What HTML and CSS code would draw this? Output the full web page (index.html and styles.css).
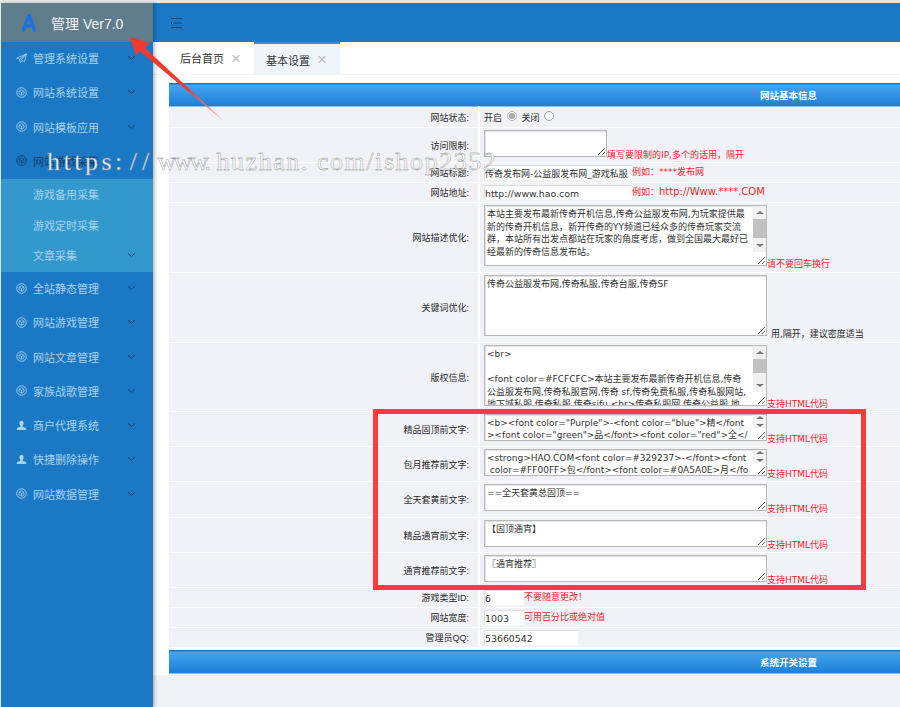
FILE: index.html
```html
<!DOCTYPE html>
<html lang="zh-CN">
<head>
    <meta charset="UTF-8">
    <title>管理 Ver7.0</title>
    <link rel="stylesheet" href="styles.css">
</head>
<body>
    <svg class="icon-defs" width="0" height="0">
        <symbol id="i-cube" viewBox="0 0 12 12">
            <circle cx="6" cy="6" r="5.2" fill="none" stroke="currentColor"/>
            <path d="M6 3 8.700 4.500v3L6 9 3.300 7.500v-3zM3.300 4.500 6 6l2.700-1.500M6 6v3" fill="none" stroke="currentColor" stroke-width=".8"/>
        </symbol>
        <symbol id="i-plane" viewBox="0 0 12 12">
            <path d="M11.400 1 .8 5.600l3 1.300.9 3.600 1.900-2.300 2.600 1.300zM3.800 6.900 11.400 1 5 8" fill="none" stroke="currentColor" stroke-width=".9"/>
        </symbol>
        <symbol id="i-user" viewBox="0 0 12 12">
            <path d="M6 .8c1.500 0 2.300 1.100 2.300 2.700S7.500 6 7.200 6.500v.8c1.500.6 4 1 4 2.700v1H.8v-1c0-1.700 2.500-2.100 4-2.700v-.8C4.500 6 3.700 5.100 3.700 3.500S4.500.8 6 .8z" fill="currentColor"/>
        </symbol>
        <symbol id="i-down" viewBox="0 0 10 6">
            <path d="M1 1l4 3.500L9 1" fill="none" stroke="currentColor"/>
        </symbol>
    </svg>

    <aside class="sidebar">
        <div class="logo">
            <svg class="logo-mark" viewBox="0 0 16 18" width="16" height="18">
                <path d="M8 .5 2 17.500M8 .5l6 17M4 12h8" fill="none" stroke="#1d6fe0" stroke-width="3"/>
            </svg>
            <span>管理 Ver7.0</span>
        </div>
        <nav>
            <a class="nav-item"><svg class="nav-icon"><use href="#i-plane"/></svg>管理系统设置<svg class="nav-arrow"><use href="#i-down"/></svg></a>
            <a class="nav-item"><svg class="nav-icon"><use href="#i-cube"/></svg>网站系统设置<svg class="nav-arrow"><use href="#i-down"/></svg></a>
            <a class="nav-item"><svg class="nav-icon"><use href="#i-cube"/></svg>网站模板应用<svg class="nav-arrow"><use href="#i-down"/></svg></a>
            <a class="nav-item nav-active"><svg class="nav-icon"><use href="#i-cube"/></svg>网站游戏采集</a>
            <div class="sub-nav">
                <a class="sub-item">游戏备用采集</a>
                <a class="sub-item">游戏定时采集</a>
                <a class="sub-item">文章采集<svg class="nav-arrow"><use href="#i-down"/></svg></a>
            </div>
            <a class="nav-item"><svg class="nav-icon"><use href="#i-cube"/></svg>全站静态管理<svg class="nav-arrow"><use href="#i-down"/></svg></a>
            <a class="nav-item"><svg class="nav-icon"><use href="#i-cube"/></svg>网站游戏管理<svg class="nav-arrow"><use href="#i-down"/></svg></a>
            <a class="nav-item"><svg class="nav-icon"><use href="#i-cube"/></svg>网站文章管理<svg class="nav-arrow"><use href="#i-down"/></svg></a>
            <a class="nav-item"><svg class="nav-icon"><use href="#i-cube"/></svg>家族战歌管理<svg class="nav-arrow"><use href="#i-down"/></svg></a>
            <a class="nav-item"><svg class="nav-icon"><use href="#i-user"/></svg>商户代理系统<svg class="nav-arrow"><use href="#i-down"/></svg></a>
            <a class="nav-item"><svg class="nav-icon"><use href="#i-user"/></svg>快捷删除操作<svg class="nav-arrow"><use href="#i-down"/></svg></a>
            <a class="nav-item"><svg class="nav-icon"><use href="#i-cube"/></svg>网站数据管理<svg class="nav-arrow"><use href="#i-down"/></svg></a>
        </nav>
    </aside>

    <div class="main">
        <header class="topbar">
            <svg class="menu-icon" viewBox="0 0 12 10" width="12" height="10">
                <path d="M1 .5h11M3.500 5H12M1 9.500h11M2.500 3.500 1 5l1.500 1.500" fill="none" stroke="#17456e"/>
            </svg>
        </header>
        <div class="tabs">
            <div class="tab">后台首页<span class="tab-close">×</span></div>
            <div class="tab tab-active">基本设置<span class="tab-close">×</span></div>
        </div>
        <div class="content">
            <table class="form-table">
                <colgroup><col class="col-label"><col></colgroup>
                <tr class="section-head"><th colspan="2">网站基本信息</th></tr>
                <tr class="h21">
                    <td class="label">网站状态:</td>
                    <td class="field">开启 <input type="radio" name="state" checked> &nbsp;关闭 <input type="radio" name="state"></td>
                </tr>
                <tr class="h35">
                    <td class="label">访问限制:</td>
                    <td class="field"><span class="ta-wrap"><textarea class="ta-small"></textarea></span><span class="hint">填写要限制的IP,多个的话用，隔开</span></td>
                </tr>
                <tr class="h20">
                    <td class="label">网站标题:</td>
                    <td class="field"><input class="inp-wide cjk" type="text" value="传奇发布网-公益服发布网_游戏私服"><span class="hint">例如：****发布网</span></td>
                </tr>
                <tr class="h20">
                    <td class="label">网站地址:</td>
                    <td class="field"><input class="inp-wide" type="text" value="http://www.hao.com"><span class="hint">例如：<span class="hint-url">http://Www.****.COM</span></span></td>
                </tr>
                <tr class="h70">
                    <td class="label">网站描述优化:</td>
                    <td class="field"><span class="ta-wrap"><textarea class="ta-large" wrap="off">本站主要发布最新传奇开机信息,传奇公益服发布网,为玩家提供最
新的传奇开机信息，新开传奇的YY频道已经众多的传奇玩家交流
群，本站所有出发点都站在玩家的角度考虑，做到全国最大最好已
经最新的传奇信息发布站。</textarea><span class="fake-scroll"><span class="sb-thumb"></span></span></span><span class="hint">请不要回车换行</span></td>
                </tr>
                <tr class="h70">
                    <td class="label">关键词优化:</td>
                    <td class="field"><span class="ta-wrap"><textarea class="ta-large">传奇公益服发布网,传奇私服,传奇台服,传奇SF</textarea></span><span class="hint hint-dark">用,隔开，建议密度适当</span></td>
                </tr>
                <tr class="h69">
                    <td class="label">版权信息:</td>
                    <td class="field"><span class="ta-wrap"><textarea class="ta-large" wrap="off">&lt;br&gt;

&lt;font color=#FCFCFC&gt;本站主要发布最新传奇开机信息,传奇
公益服发布网,传奇私服官网,传奇 sf,传奇免费私服,传奇私服网站,
地下城私服,传奇私服,传奇sifu,&lt;br&gt;传奇私服网,传奇公益服,地</textarea><span class="fake-scroll"><span class="sb-thumb sb-thumb-small"></span></span></span><span class="hint">支持HTML代码</span></td>
                </tr>
                <tr class="h35">
                    <td class="label">精品固顶前文字:</td>
                    <td class="field"><span class="ta-wrap"><textarea class="ta-line" wrap="off">&lt;b&gt;&lt;font color="Purple"&gt;-&lt;font color="blue"&gt;精&lt;/font
&gt;&lt;font color="green"&gt;品&lt;/font&gt;&lt;font color="red"&gt;全&lt;/</textarea><span class="fake-scroll fake-scroll-short"></span></span><span class="hint">支持HTML代码</span></td>
                </tr>
                <tr class="h35">
                    <td class="label">包月推荐前文字:</td>
                    <td class="field"><span class="ta-wrap"><textarea class="ta-line" wrap="off">&lt;strong&gt;HAO.COM&lt;font color=#329237&gt;-&lt;/font&gt;&lt;font
 color=#FF00FF&gt;包&lt;/font&gt;&lt;font color=#0A5A0E&gt;月&lt;/fo</textarea><span class="fake-scroll fake-scroll-short"></span></span><span class="hint">支持HTML代码</span></td>
                </tr>
                <tr class="h36">
                    <td class="label">全天套黄前文字:</td>
                    <td class="field"><span class="ta-wrap"><textarea class="ta-line">==全天套黄总固顶==</textarea></span><span class="hint">支持HTML代码</span></td>
                </tr>
                <tr class="h35">
                    <td class="label">精品通宵前文字:</td>
                    <td class="field"><span class="ta-wrap"><textarea class="ta-line">【固顶通宵】</textarea></span><span class="hint">支持HTML代码</span></td>
                </tr>
                <tr class="h35">
                    <td class="label">通宵推荐前文字:</td>
                    <td class="field"><span class="ta-wrap"><textarea class="ta-line">〖通宵推荐〗</textarea></span><span class="hint">支持HTML代码</span></td>
                </tr>
                <tr class="h20">
                    <td class="label">游戏类型ID:</td>
                    <td class="field"><input class="inp-small" type="text" value="6"><span class="hint">不要随意更改！</span></td>
                </tr>
                <tr class="h20">
                    <td class="label">网站宽度:</td>
                    <td class="field"><input class="inp-small" type="text" value="1003"><span class="hint">可用百分比或绝对值</span></td>
                </tr>
                <tr class="h20">
                    <td class="label">管理员QQ:</td>
                    <td class="field"><input class="inp-qq" type="text" value="53660542"></td>
                </tr>
                <tr class="spacer"><td colspan="2"></td></tr>
                <tr class="section-head"><th colspan="2">系统开关设置</th></tr>
            </table>
        </div>
        <div class="page-foot"></div>
    </div>

    <!-- annotations drawn over the screenshot -->
    <div class="mark-box"></div>
    <svg class="mark-arrow" viewBox="0 0 100 90" width="100" height="90">
        <defs>
            <linearGradient id="arrow-fade" x1="0" y1="0" x2="1" y2="1">
                <stop offset="0.6" stop-color="#f0392f"/>
                <stop offset="1" stop-color="#f9a3a0"/>
            </linearGradient>
        </defs>
        <path d="M1 0 21 6 15.500 10.500 96 85 10.500 14 7 19z" fill="url(#arrow-fade)"/>
    </svg>
    <div class="watermark"><span class="wm-wide">https:</span><span class="wm-slash">//</span><span class="wm-tight">www.</span> huzhan. com/ishop2352</div>
</body>
</html>
```

FILE: styles.css
```css
* {
    box-sizing: border-box;
}
body {
    margin: 0;
    height: 707px;
    overflow: hidden;
    display: flex;
    padding: 3px 0 0 1px;
    background: #e4e6e8;
    font-family: "Liberation Sans", "Noto Sans CJK SC", sans-serif;
    font-size: 9px;
    color: #2a2a2a;
}
.icon-defs {
    position: absolute;
}

/* sidebar */
.sidebar {
    width: 152px;
    flex: none;
    background: #1b78c4;
    box-shadow: 2px 0 3px rgba(0, 0, 0, 0.25);
    z-index: 1;
    font-size: 11px;
}
.logo {
    height: 39px;
    background: #607d8b;
    display: flex;
    align-items: center;
    padding-left: 20px;
    color: #f2f4f5;
    font-size: 14px;
}
.logo-mark {
    margin-right: 14px;
}
.nav-item, .sub-item {
    display: flex;
    align-items: center;
    color: #a9d2ee;
}
.nav-item {
    height: 34.25px;
    padding: 0 0 2px 15px;
}
.nav-active {
    color: #123f66;
}
.sub-nav {
    height: 93px;
    background: #3399cc;
}
.sub-item {
    height: 30.6px;
    padding-left: 32px;
}
.nav-icon {
    width: 11px;
    height: 11px;
    margin-right: 6px;
}
.nav-arrow {
    width: 9px;
    height: 6px;
    margin-left: auto;
    margin-right: 17px;
    color: #123f66;
}

/* top */
.main {
    flex: 1;
    min-width: 0;
    display: flex;
    flex-direction: column;
    background: #fff;
}
.topbar {
    height: 39px;
    flex: none;
    background: #1b78c4;
    display: flex;
    align-items: center;
    padding-left: 17px;
}
.tabs {
    height: 33px;
    flex: none;
    display: flex;
    padding-left: 16px;
    border-bottom: 1px solid #f2f3f5;
    font-size: 11px;
}
.tab {
    width: 85px;
    display: flex;
    align-items: center;
    padding-left: 11px;
    color: #333;
}
.tab-active {
    width: 86px;
    padding-left: 12px;
    padding-top: 1px;
    background: #f0f5fc;
    border-top: 2px solid #2f93e6;
}
.tab-close {
    margin-left: 7px;
    color: #bbb;
    font-size: 17px;
    line-height: 1;
}

/* form table */
.content {
    flex: none;
    height: 600px;
    padding: 8px 0 0 16px;
}
.form-table {
    width: 100%;
    border-collapse: collapse;
    table-layout: fixed;
}
.col-label {
    width: 310px;
}
.form-table td {
    background: #f0f2f7;
    border-bottom: 1px solid #fff;
    padding: 0;
}
.form-table .spacer td {
    background: #fff;
    border: 0;
}
.spacer { height: 3px; }
.section-head th {
    height: 23px;
    padding: 0 83px 0 0;
    text-align: right;
    color: #fff;
    font-size: 9.500px;
    background: linear-gradient(#47a4ef, #1a7fd6);
    border-top: 1px solid #1f6fae;
    border-bottom: 1px solid #85c4ee;
}
.h21 { height: 21px; }
.h20 { height: 20px; }
.h35 { height: 35px; }
.h36 { height: 36px; }
.h69 { height: 69px; }
.h70 { height: 70px; }
.form-table .label {
    padding-right: 9px;
    text-align: right;
    border-right: 2px solid #fff;
}
.form-table .field {
    padding-left: 4px;
    white-space: nowrap;
}
.field input[type="radio"] {
    width: 10px;
    height: 10px;
    margin: 0 0 3px 2px;
    accent-color: #8a8a8a;
    opacity: 0.7;
}
input[type="text"], textarea {
    font-family: "DejaVu Sans", "Noto Sans CJK SC", sans-serif;
    line-height: 12.700px;
    color: #333;
    background: #fff;
}
input[type="text"] {
    height: 15px;
    padding: 1px 0;
    font-size: 9.400px;
    border: solid #dedede;
    border-width: 1px 0 0 1px;
    vertical-align: middle;
}
input.cjk {
    font-size: 9px;
}
textarea {
    display: block;
    padding: 2px;
    font-size: 9px;
    overflow: hidden;
    border: 1px solid #b8b8b8;
    box-shadow: inset 1px 1px 1px #e2e2e2;
}
.ta-wrap {
    display: inline-block;
    position: relative;
    vertical-align: bottom;
    margin-bottom: 4px;
}
.fake-scroll {
    position: absolute;
    top: 1px;
    right: 1px;
    bottom: 14px;
    width: 13px;
    padding: 5px 0;
    background: #f1f1f1;
    display: flex;
    flex-direction: column;
    align-items: center;
}
.fake-scroll::before, .fake-scroll::after {
    content: "";
    flex: none;
    border: 4px solid transparent;
    border-top-width: 0;
    border-bottom: 3px solid #777;
}
.fake-scroll::after {
    margin-top: auto;
    border-bottom-width: 0;
    border-top: 3px solid #777;
}
.fake-scroll-short {
    padding: 1px 0;
    bottom: 13px;
}
.sb-thumb {
    flex: none;
    align-self: stretch;
    height: 19px;
    margin-top: 5px;
    background: #c1c1c1;
}
.sb-thumb-small {
    height: 14px;
}
.inp-wide { width: 148px; }
.inp-small { width: 40px; }
.inp-qq { width: 94px; }
.ta-small { width: 123px; height: 27px; }
.ta-large { width: 283px; height: 61px; }
.ta-line { width: 283px; height: 27px; }
.hint {
    color: #f5242c;
    font-family: "DejaVu Sans", "Noto Sans CJK SC", sans-serif;
}
.hint-url {
    font-size: 10px;
}
.hint-dark {
    color: #2a2a2a;
    margin-left: 4px;
}
.page-foot {
    flex: 1;
    background: #f0f2f7;
}

/* red marks and watermark */
.mark-box {
    position: absolute;
    left: 373px;
    top: 409px;
    width: 493px;
    height: 181px;
    border: 5px solid #ff3b3b;
    z-index: 2;
}
.mark-arrow {
    position: absolute;
    left: 129px;
    top: 37px;
    z-index: 2;
}
.watermark {
    position: absolute;
    left: 47px;
    top: 147px;
    font-family: "Liberation Serif", serif;
    font-size: 26px;
    letter-spacing: 1.550px;
    color: rgba(255, 255, 255, 0.92);
    -webkit-text-stroke: 0.4px #8a8a8a;
    white-space: nowrap;
    z-index: 3;
}
.wm-wide {
    letter-spacing: 3.500px;
    margin-right: 4px;
}
.wm-slash {
    letter-spacing: 5px;
    margin-right: 3px;
}
.wm-tight {
    letter-spacing: -2.500px;
}
```
